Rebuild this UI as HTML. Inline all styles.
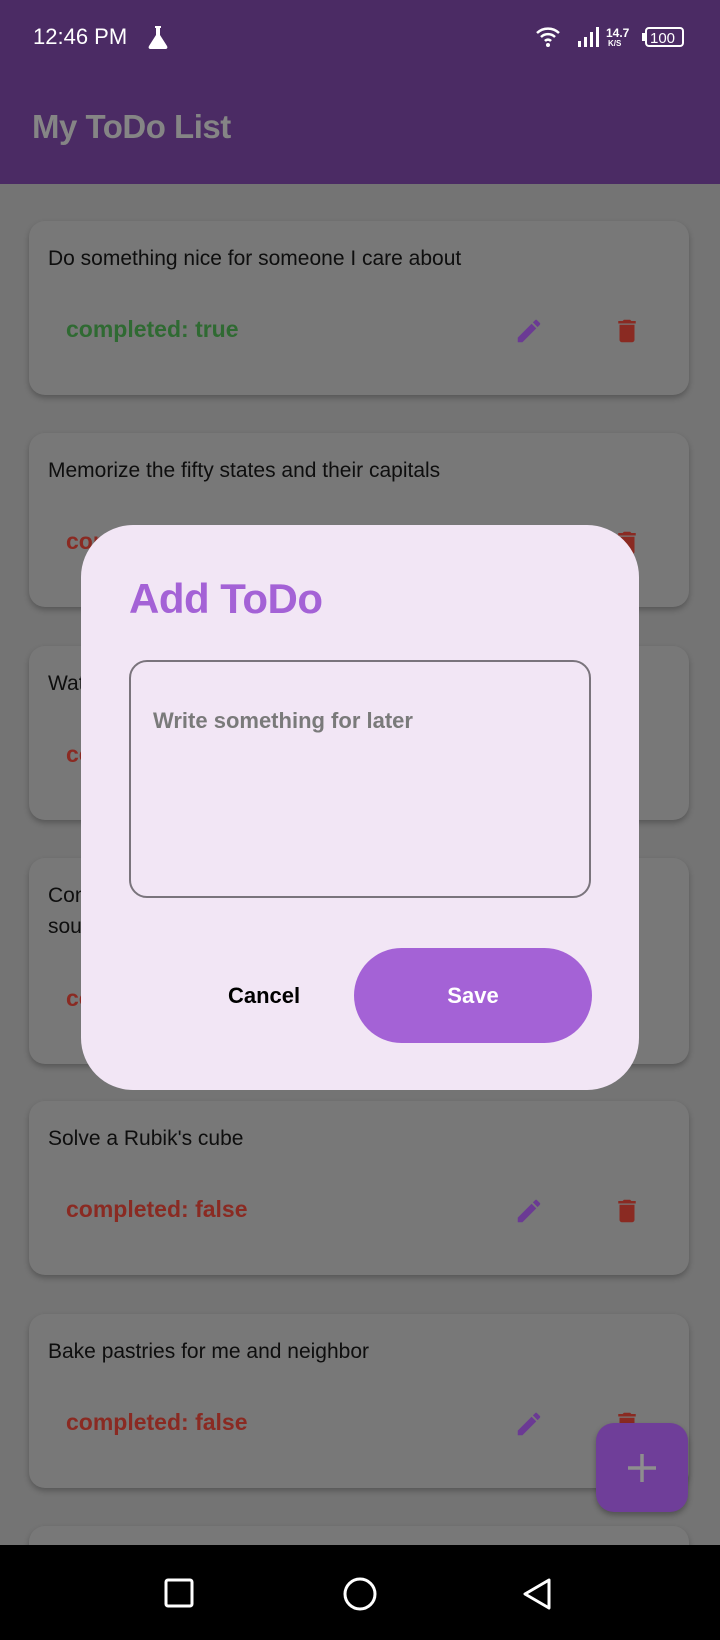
<!DOCTYPE html>
<html><head><meta charset="utf-8"><style>
*{margin:0;padding:0;box-sizing:border-box}
html{width:720px;height:1640px;overflow:hidden}
body{width:720px;height:1640px;overflow:hidden;background:#747474;font-family:"Liberation Sans",sans-serif;position:relative}
.status{position:absolute;top:0;left:0;width:720px;height:184px;background:#4b2b64}
.time{position:absolute;left:33px;top:24px;color:#fff;font-size:22px}
.title{position:absolute;left:32px;top:108px;color:#858585;font-size:33px;font-weight:bold;letter-spacing:-0.5px}
.card{position:absolute;left:29px;width:660px;background:#787878;border-radius:16px;box-shadow:0 3px 6px rgba(0,0,0,.25)}
.card .t{position:absolute;left:19px;top:22px;font-size:21px;color:#0e0e0e;line-height:31px}
.card .c{position:absolute;left:37px;font-size:23px;font-weight:bold}
.pen{position:absolute;left:485px}
.bin{position:absolute;left:583px}
.dialog{position:absolute;left:81px;top:525px;width:558px;height:565px;background:#f2e6f5;border-radius:52px}
.nav{position:absolute;left:0;top:1545px;width:720px;height:95px;background:#000}
</style></head><body>
<div class="status">
<div class="time">12:46 PM</div>
<svg style="position:absolute;left:146px;top:24px" width="24" height="26" viewBox="0 0 24 26"><path d="M9 2h6v2h-1v7l7 11c1 2 0 3-2 3H5c-2 0-3-1-2-3l7-11V4H9z" fill="#fff"/></svg>
<svg style="position:absolute;left:535px;top:24px" width="150" height="26" viewBox="0 0 150 26">
<path d="M2 9a16 16 0 0 1 22 0" stroke="#fff" stroke-width="2.5" fill="none"/><path d="M6 13a10 10 0 0 1 14 0" stroke="#fff" stroke-width="2.5" fill="none"/><path d="M10 17a4 4 0 0 1 6 0" stroke="#fff" stroke-width="2.5" fill="none"/><circle cx="13" cy="21" r="2" fill="#fff"/>
<rect x="43" y="17" width="3" height="6" fill="#fff"/><rect x="49" y="13" width="3" height="10" fill="#fff"/><rect x="55" y="8" width="3" height="15" fill="#fff"/><rect x="61" y="3" width="3" height="20" fill="#fff"/>
<text x="71" y="13" fill="#fff" font-size="12" font-weight="bold" font-family="Liberation Sans">14.7</text><text x="73" y="22" fill="#fff" font-size="8" font-weight="bold" font-family="Liberation Sans">K/S</text>
<rect x="111" y="4" width="37" height="18" rx="3" stroke="#fff" stroke-width="2" fill="none"/><rect x="107" y="9" width="3" height="8" fill="#fff"/><text x="115" y="19" fill="#fff" font-size="15" font-family="Liberation Sans">100</text>
</svg>
<div class="title">My ToDo List</div>
</div>

<div class="card" style="top:221px;height:174px"><div class="t">Do something nice for someone I care about</div><div class="c" style="top:95px;color:#2f6a32">completed: true</div>
<svg class="pen" style="top:95px" width="30" height="30" viewBox="0 0 24 24"><path d="M3 17.25V21h3.75L17.81 9.94l-3.75-3.75L3 17.25zM20.71 7.04a1 1 0 0 0 0-1.41l-2.34-2.34a1 1 0 0 0-1.41 0l-1.83 1.83 3.75 3.75 1.83-1.83z" fill="#6b3a94"/></svg>
<svg class="bin" style="top:95px" width="30" height="30" viewBox="0 0 24 24"><path d="M6 19c0 1.1.9 2 2 2h8c1.1 0 2-.9 2-2V7H6v12zM19 4h-3.5l-1-1h-5l-1 1H5v2h14V4z" fill="#8a2a22"/></svg></div>

<div class="card" style="top:433px;height:174px"><div class="t">Memorize the fifty states and their capitals</div><div class="c" style="top:95px;color:#8a2a22">completed: false</div>
<svg class="bin" style="top:95px" width="30" height="30" viewBox="0 0 24 24"><path d="M6 19c0 1.1.9 2 2 2h8c1.1 0 2-.9 2-2V7H6v12zM19 4h-3.5l-1-1h-5l-1 1H5v2h14V4z" fill="#8a2a22"/></svg></div>

<div class="card" style="top:646px;height:174px"><div class="t">Watch a classic movie</div><div class="c" style="top:95px;color:#8a2a22">completed: false</div></div>

<div class="card" style="top:858px;height:206px"><div class="t">Contribute code or a monetary donation to an open-<br>source software project</div><div class="c" style="top:127px;color:#8a2a22">completed: false</div></div>

<div class="card" style="top:1101px;height:174px"><div class="t">Solve a Rubik's cube</div><div class="c" style="top:95px;color:#8a2a22">completed: false</div>
<svg class="pen" style="top:95px" width="30" height="30" viewBox="0 0 24 24"><path d="M3 17.25V21h3.75L17.81 9.94l-3.75-3.75L3 17.25zM20.71 7.04a1 1 0 0 0 0-1.41l-2.34-2.34a1 1 0 0 0-1.41 0l-1.83 1.83 3.75 3.75 1.83-1.83z" fill="#6b3a94"/></svg>
<svg class="bin" style="top:95px" width="30" height="30" viewBox="0 0 24 24"><path d="M6 19c0 1.1.9 2 2 2h8c1.1 0 2-.9 2-2V7H6v12zM19 4h-3.5l-1-1h-5l-1 1H5v2h14V4z" fill="#8a2a22"/></svg></div>

<div class="card" style="top:1314px;height:174px"><div class="t">Bake pastries for me and neighbor</div><div class="c" style="top:95px;color:#8a2a22">completed: false</div>
<svg class="pen" style="top:95px" width="30" height="30" viewBox="0 0 24 24"><path d="M3 17.25V21h3.75L17.81 9.94l-3.75-3.75L3 17.25zM20.71 7.04a1 1 0 0 0 0-1.41l-2.34-2.34a1 1 0 0 0-1.41 0l-1.83 1.83 3.75 3.75 1.83-1.83z" fill="#6b3a94"/></svg>
<svg class="bin" style="top:95px" width="30" height="30" viewBox="0 0 24 24"><path d="M6 19c0 1.1.9 2 2 2h8c1.1 0 2-.9 2-2V7H6v12zM19 4h-3.5l-1-1h-5l-1 1H5v2h14V4z" fill="#8a2a22"/></svg></div>

<div class="card" style="top:1526px;height:60px"></div>

<div style="position:absolute;left:596px;top:1423px;width:92px;height:89px;background:#6f3e99;border-radius:18px;box-shadow:0 3px 6px rgba(0,0,0,.3)">
<svg style="position:absolute;left:30px;top:29px" width="32" height="32"><path d="M16 2v28M2 16h28" stroke="#8e8e8e" stroke-width="3.5"/></svg></div>

<div class="dialog">
<div style="position:absolute;left:48px;top:50px;font-size:42px;font-weight:bold;color:#a462d6;letter-spacing:-0.5px">Add ToDo</div>
<div style="position:absolute;left:48px;top:135px;width:462px;height:238px;border:2px solid #7a747c;border-radius:18px"></div>
<div style="position:absolute;left:72px;top:183px;font-size:22px;color:#7a7a7a;font-weight:bold">Write something for later</div>
<div style="position:absolute;left:147px;top:458px;font-size:22px;font-weight:bold;color:#000">Cancel</div>
<div style="position:absolute;left:273px;top:423px;width:238px;height:95px;background:#a462d6;border-radius:48px;color:#fff;font-size:22px;font-weight:bold;text-align:center;line-height:95px">Save</div>
</div>

<div class="nav">
<svg style="position:absolute;left:164px;top:33px" width="30" height="30"><rect x="2" y="2" width="26" height="26" rx="2" stroke="#fff" stroke-width="3" fill="none"/></svg>
<svg style="position:absolute;left:343px;top:32px" width="34" height="34"><circle cx="17" cy="17" r="15" stroke="#fff" stroke-width="3" fill="none"/></svg>
<svg style="position:absolute;left:521px;top:32px" width="32" height="34"><path d="M28 3L4 17l24 14z" stroke="#fff" stroke-width="3" fill="none" stroke-linejoin="round"/></svg>
</div>
</body></html>
